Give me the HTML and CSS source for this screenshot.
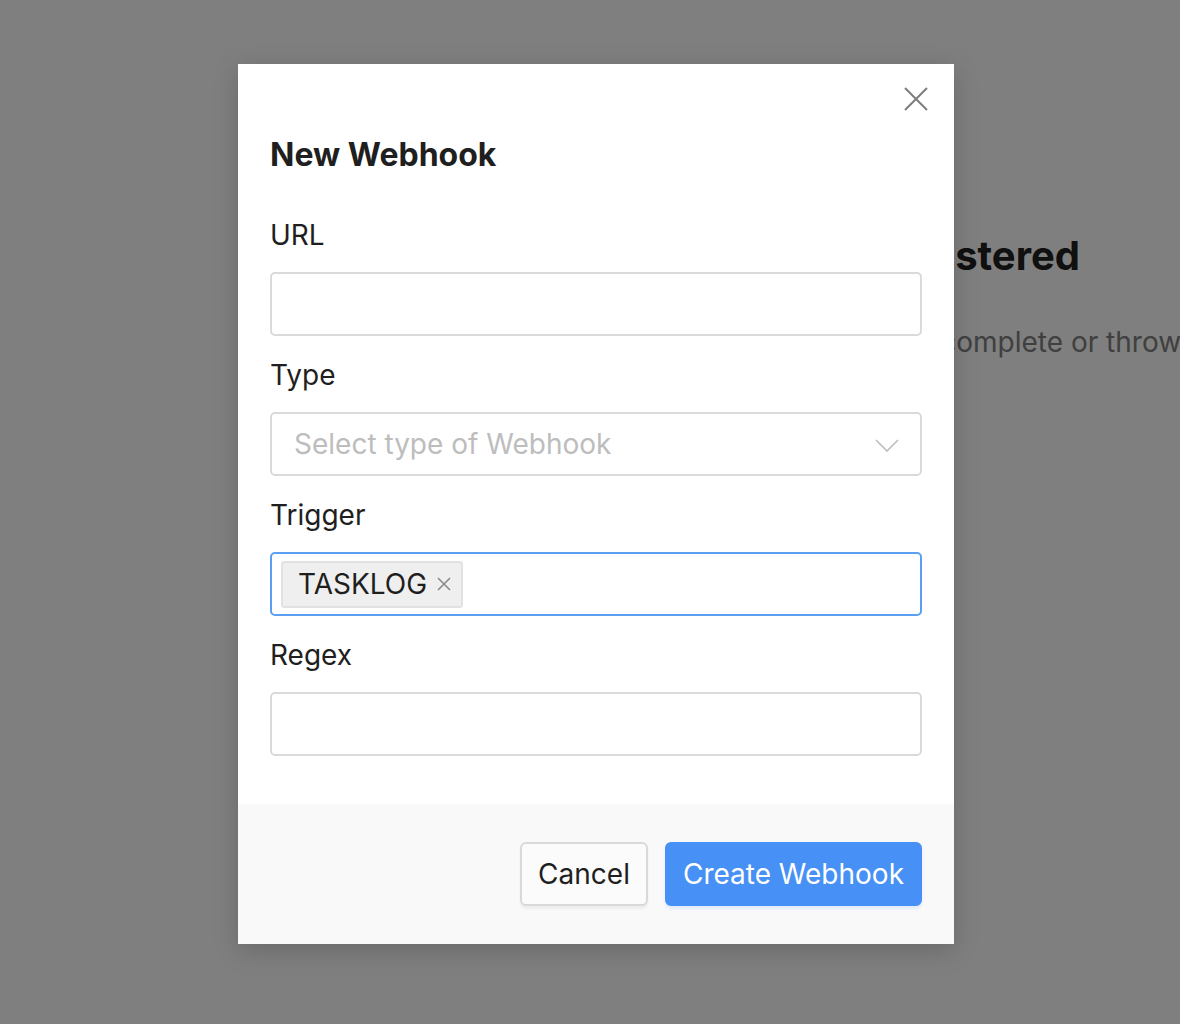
FILE: index.html
```html
<!DOCTYPE html>
<html lang="en">
<head>
<meta charset="utf-8">
<title>New Webhook</title>
<link rel="stylesheet" href="styles.css">
</head>
<body>
<main class="page">
  <h1 class="page-title">No webhooks registered</h1>
  <p class="page-text">Webhooks fire when tasks complete or throw errors.</p>
</main>
<div class="overlay">
  <div class="modal">
    <button class="close" aria-label="Close">
      <svg width="24" height="24" viewBox="0 0 24 24"><path d="M1 1L23 23M23 1L1 23" stroke="#7d7d7d" stroke-width="2" fill="none"/></svg>
    </button>
    <div class="modal-body">
      <h2 class="modal-title">New Webhook</h2>
      <div class="field">
        <label class="label">URL</label>
        <div class="input"></div>
      </div>
      <div class="field">
        <label class="label">Type</label>
        <div class="input select">
          <span class="placeholder">Select type of Webhook</span>
          <svg class="chevron" width="24" height="13" viewBox="0 0 24 13"><path d="M1 1L12 12L23 1" stroke="#bdbdbd" stroke-width="1.6" fill="none"/></svg>
        </div>
      </div>
      <div class="field">
        <label class="label">Trigger</label>
        <div class="input tags focused">
          <span class="tag">TASKLOG<svg class="tag-x" width="14" height="14" viewBox="0 0 14 14"><path d="M1 1L13 13M13 1L1 13" stroke="#8a8a8a" stroke-width="1.6" fill="none"/></svg></span>
        </div>
      </div>
      <div class="field">
        <label class="label">Regex</label>
        <div class="input"></div>
      </div>
    </div>
    <div class="modal-footer">
      <button class="btn btn-default">Cancel</button>
      <button class="btn btn-primary">Create Webhook</button>
    </div>
  </div>
</div>
</body>
</html>
```
FILE: styles.css
```css
* { box-sizing: border-box; }
html, body { margin: 0; padding: 0; }
body {
  font-family: Inter, "Noto Sans", sans-serif;
  background: #ffffff;
  width: 1180px;
  height: 1024px;
  overflow: hidden;
  position: relative;
}
.page {
  width: 1180px;
  padding: 228px 100px 0 583px;
  white-space: nowrap;
  overflow: hidden;
}
.page-title {
  margin: 0;
  font-size: 40px;
  line-height: 56px;
  font-weight: 700;
  color: #202020;
  text-align: right;
}
.page-text {
  margin: 38px -100px 0 0;
  font-size: 28px;
  line-height: 40px;
  color: #808080;
  overflow: hidden;
}
.overlay {
  position: absolute;
  inset: 0;
  background: rgba(0, 0, 0, 0.5);
}
.modal {
  position: absolute;
  left: 238px;
  top: 64px;
  width: 716px;
  background: #ffffff;
  box-shadow: 0 6px 24px rgba(0, 0, 0, 0.18);
}
.close {
  position: absolute;
  top: 23px;
  right: 26px;
  width: 24px;
  height: 24px;
  padding: 0;
  border: 0;
  background: none;
  display: flex;
}
.modal-body {
  padding: 71px 32px 48px;
}
.modal-title {
  margin: 0 0 41px;
  font-size: 32px;
  line-height: 40px;
  font-weight: 700;
  color: #1f1f1f;
}
.field + .field { margin-top: 20px; }
.label {
  display: block;
  font-size: 28px;
  line-height: 39px;
  margin-bottom: 17px;
  color: #1f1f1f;
}
.input {
  height: 64px;
  border: 2px solid #dadada;
  border-radius: 5px;
  background: #fff;
}
.select {
  display: flex;
  align-items: center;
  justify-content: space-between;
  padding: 0 21px 0 22px;
}
.placeholder {
  font-size: 28px;
  color: #bdbdbd;
}
.chevron { margin-top: 2px; }
.tags {
  display: flex;
  align-items: center;
  padding: 0 9px;
}
.focused { border-color: #5b9ff2; }
.tag {
  display: inline-flex;
  align-items: center;
  height: 47px;
  padding: 0 10px 0 15px;
  background: #efefef;
  border: 2px solid #e2e2e2;
  border-radius: 3px;
  font-size: 28px;
  color: #1f1f1f;
}
.tag-x { margin-left: 10px; }
.modal-footer {
  display: flex;
  justify-content: flex-end;
  gap: 17px;
  padding: 38px 32px;
  background: #f9f9f9;
}
.btn {
  height: 64px;
  padding: 0 16px;
  font-family: Inter, "Noto Sans", sans-serif;
  font-size: 28px;
  border-radius: 6px;
  cursor: pointer;
}
.btn-default {
  background: #fbfbfb;
  color: #1f1f1f;
  border: 2px solid #d9d9d9;
  box-shadow: 0 3px 3px rgba(0, 0, 0, 0.05);
}
.btn-primary {
  background: #4790f5;
  color: #ffffff;
  border: 2px solid #4790f5;
  box-shadow: 0 3px 3px rgba(71, 144, 245, 0.12);
}
```
